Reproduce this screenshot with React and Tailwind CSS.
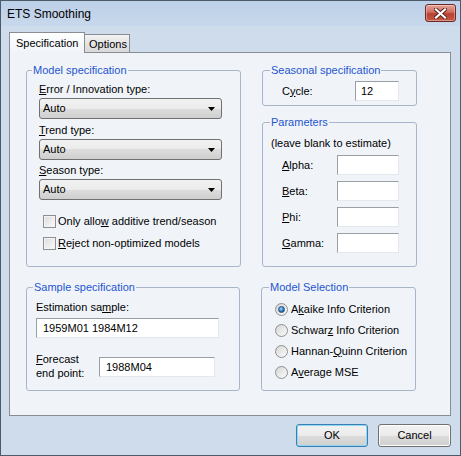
import React from 'react';

const panelBg = 'bg-[#f0f4f9]';

function Group({ label, labelPos, className, children }) {
    return (
        <div className={`relative rounded-[3px] border border-[#a9b6c9] ${className}`}>
            <span className={`absolute -top-[7px] ${labelPos} px-[1px] leading-[13px] text-[#1f55cf] ${panelBg}`}>
                {label}
            </span>
            {children}
        </div>
    );
}

function Combo() {
    return (
        <div className="flex h-[21px] w-[183px] items-center justify-between rounded-[3px] border border-[#707070] bg-[linear-gradient(#f2f2f2,#ebebeb_50%,#dddddd_50%,#cfcfcf)] pl-[3px] pr-[6px]">
            <span className="leading-[13px]">Auto</span>
            <svg width="7" height="4" viewBox="0 0 7 4">
                <path d="M0 0H7L3.5 4Z" fill="#000" />
            </svg>
        </div>
    );
}

function TextBox({ className, value, pad = 'pl-[6px]' }) {
    return (
        <div className={`flex h-[20px] items-center border border-[#e3e8ee] border-l-[#9a9ea5] border-t-[#9a9ea5] bg-white ${pad} ${className}`}>
            <span className="leading-[13px]">{value}</span>
        </div>
    );
}

function Check({ children }) {
    return (
        <div className="flex h-[13px] items-center gap-[2px]">
            <div className="h-[13px] w-[13px] border border-[#8f8f8f] bg-[linear-gradient(135deg,#dcdcdc,#fbfbfb)] shadow-[inset_0_0_0_1px_#f4f4f4]" />
            <span className="leading-[13px]">{children}</span>
        </div>
    );
}

function Radio({ checked, children }) {
    return (
        <div className="flex h-[13px] items-center gap-[3px]">
            <div className="flex h-[13px] w-[13px] items-center justify-center rounded-full border border-[#8f8f8f] bg-[linear-gradient(135deg,#d6d6d6,#fbfbfb)]">
                {checked && (
                    <div className="h-[7px] w-[7px] rounded-full border border-[#1d4f83] bg-[radial-gradient(circle_at_40%_35%,#a6d6f5,#2a72b8_60%,#174e8a)]" />
                )}
            </div>
            <span className="leading-[13px]">{children}</span>
        </div>
    );
}

function ParamRow({ children }) {
    return (
        <div className="flex h-[20px] items-center">
            <span className="w-[55px] pl-[11px] leading-[13px] box-content">{children}</span>
            <TextBox className="w-[62px]" value="" />
        </div>
    );
}

export default function App() {
    return (
        <div className="flex h-[456px] w-[461px] flex-col border border-[#4d5a69] bg-[#cfdcec] text-[11px] text-black [font-family:'Liberation_Sans',Arial,sans-serif]">
            {/* title bar */}
            <div className="flex h-[25px] shrink-0 items-start justify-between bg-[linear-gradient(#bcd0e8,#c8d8ec)] pr-[4px]">
                <span className="mt-[5px] pl-[6px] text-[12px] leading-[16px]">ETS Smoothing</span>
                <div className="mt-[3px] flex h-[18px] w-[31px] items-center justify-center rounded-[3px] border border-[#6b2a25] bg-[linear-gradient(#e4a59b,#cf6d5f_45%,#b84233_55%,#c65a45)] shadow-[inset_0_0_0_1px_rgba(255,255,255,0.35)]">
                    <svg width="13" height="11" viewBox="0 0 13 11">
                        <path d="M2 1.5L11 9.5M11 1.5L2 9.5" stroke="#5a1f1a" strokeWidth="4" strokeLinecap="square" />
                        <path d="M2 1.5L11 9.5M11 1.5L2 9.5" stroke="#fff" strokeWidth="2.2" strokeLinecap="square" />
                    </svg>
                </div>
            </div>

            {/* body */}
            <div className="flex flex-1 flex-col px-[8px] pt-[6px]">
                {/* tabs */}
                <div className="flex h-[20px] items-end">
                    <div className="relative z-10 -mb-[1px] h-[21px] w-[76px] border border-b-0 border-[#898c95] bg-[linear-gradient(#ffffff,#f0f4f9)] pl-[6px] pt-[4px] leading-[13px]">
                        Specification
                    </div>
                    <div className="h-[18px] w-[45px] border border-b-0 border-l-0 border-[#898c95] bg-[linear-gradient(#f3f3f3,#e4e4e4_50%,#d9d9d9)] pl-[4px] pt-[3px] leading-[13px]">
                        Options
                    </div>
                </div>

                {/* panel */}
                <div className={`flex h-[364px] w-[442px] flex-col gap-[20px] border border-[#898c95] ${panelBg} pl-[16px] pt-[17px]`}>
                    <div className="flex h-[197px] gap-[21px]">
                        <Group label="Model specification" labelPos="left-[5px]" className="h-[197px] w-[215px] pl-[12px] pt-[12px]">
                            <div className="leading-[13px]"><u>E</u>rror / Innovation type:</div>
                            <div className="mt-[2px]"><Combo /></div>
                            <div className="mt-[5px] leading-[13px]"><u>T</u>rend type:</div>
                            <div className="mt-[2px]"><Combo /></div>
                            <div className="mt-[4px] leading-[13px]"><u>S</u>eason type:</div>
                            <div className="mt-[2px]"><Combo /></div>
                            <div className="ml-[4px] mt-[15px] flex flex-col gap-[9px]">
                                <Check>Only allo<u>w</u> additive trend/season</Check>
                                <Check><u>R</u>eject non-optimized models</Check>
                            </div>
                        </Group>
                        <div className="flex w-[155px] flex-col gap-[16px]">
                            <Group label="Seasonal specification" labelPos="left-[7px]" className="h-[36px] pt-[10px]">
                                <div className="flex items-center">
                                    <span className="w-[73px] pl-[19px] box-content leading-[13px]">C<u>y</u>cle:</span>
                                    <TextBox className="w-[44px]" value="12" pad="pl-[5px]" />
                                </div>
                            </Group>
                            <Group label="Parameters" labelPos="left-[7px]" className="h-[145px] pl-[8px] pt-[14px]">
                                <div className="leading-[13px]">(leave blank to estimate)</div>
                                <div className="mt-[5px] flex flex-col gap-[6px]">
                                    <ParamRow><u>A</u>lpha:</ParamRow>
                                    <ParamRow><u>B</u>eta:</ParamRow>
                                    <ParamRow><u>P</u>hi:</ParamRow>
                                    <ParamRow><u>G</u>amma:</ParamRow>
                                </div>
                            </Group>
                        </div>
                    </div>

                    <div className="flex h-[104px] gap-[21px]">
                        <Group label="Sample specification" labelPos="left-[6px]" className="h-[104px] w-[214px] pl-[9px] pt-[13px]">
                            <div className="leading-[13px]">Estimation sa<u>m</u>ple:</div>
                            <TextBox className="mt-[4px] w-[183px]" value="1959M01 1984M12" />
                            <div className="mt-[14px] flex items-start">
                                <div className="w-[63px] leading-[14px]">
                                    <u>F</u>orecast<br />end point:
                                </div>
                                <TextBox className="mt-[5px] w-[116px]" value="1988M04" />
                            </div>
                        </Group>
                        <Group label="Model Selection" labelPos="left-[7px]" className="h-[104px] w-[155px] pl-[13px] pt-[15px]">
                            <div className="flex flex-col gap-[8px]">
                                <Radio checked>A<u>k</u>aike Info Criterion</Radio>
                                <Radio>Schwar<u>z</u> Info Criterion</Radio>
                                <Radio>Hannan-<u>Q</u>uinn Criterion</Radio>
                                <Radio>A<u>v</u>erage MSE</Radio>
                            </div>
                        </Group>
                    </div>
                </div>

                {/* buttons */}
                <div className="mt-[8px] flex w-[442px] justify-end gap-[10px]">
                    <button className="h-[23px] w-[72px] rounded-[3px] border border-[#3c7fb1] bg-[linear-gradient(#f2f2f2,#ebebeb_50%,#dddddd_50%,#cfcfcf)] leading-[13px] shadow-[inset_0_0_0_1px_#8fd7f5]">
                        OK
                    </button>
                    <button className="h-[23px] w-[73px] rounded-[3px] border border-[#707070] bg-[linear-gradient(#f2f2f2,#ebebeb_50%,#dddddd_50%,#cfcfcf)] leading-[13px] shadow-[inset_0_0_0_1px_#fcfcfc]">
                        Cancel
                    </button>
                </div>
            </div>
        </div>
    );
}
